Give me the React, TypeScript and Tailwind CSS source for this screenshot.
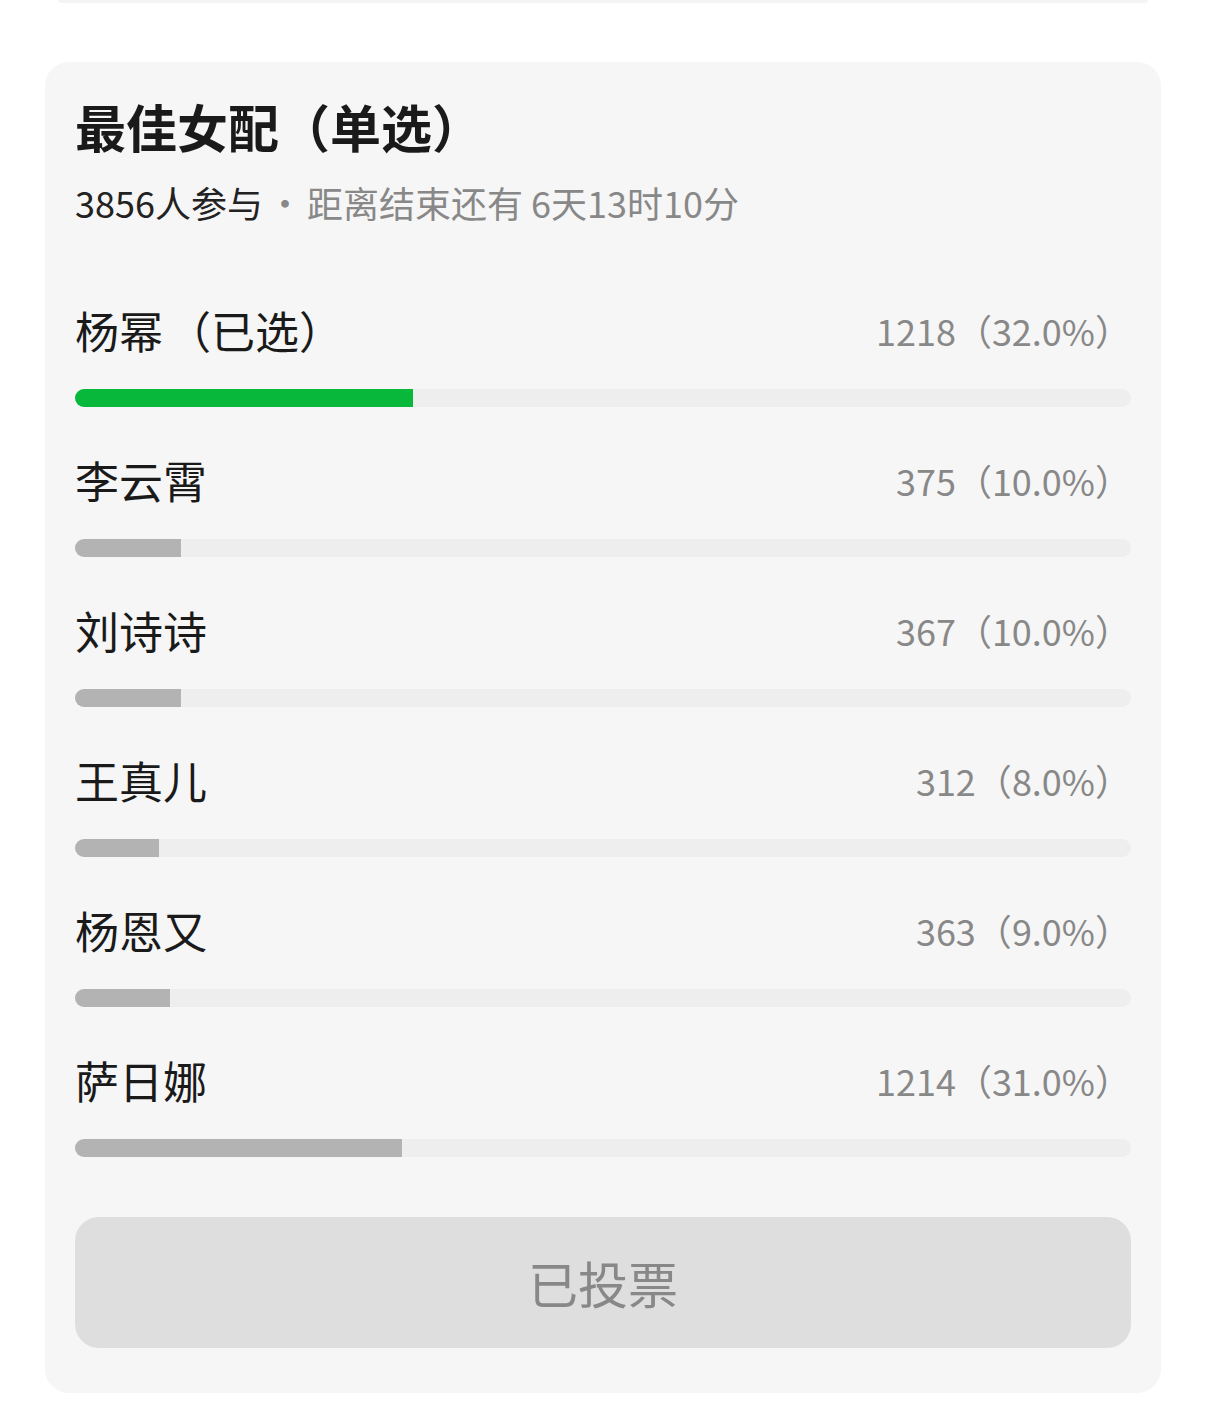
import * as React from "react";

type Option = {
  name: string;
  votes: number;
  percent: number;
  picked?: boolean;
};

const OPTIONS: Option[] = [
  { name: "杨幂", votes: 1218, percent: 32, picked: true },
  { name: "李云霄", votes: 375, percent: 10 },
  { name: "刘诗诗", votes: 367, percent: 10 },
  { name: "王真儿", votes: 312, percent: 8 },
  { name: "杨恩又", votes: 363, percent: 9 },
  { name: "萨日娜", votes: 1214, percent: 31 },
];

const FONT = "font-['Noto_Sans_CJK_SC','Noto_Sans',sans-serif]";

function OptionRow({ option }: { option: Option }) {
  return (
    <div className="flex flex-col">
      <div className="flex items-center justify-between">
        <span className="text-[44px] leading-[56px] text-[#1a1a1a]">
          {option.name}
          {option.picked && <span className="ml-[4px]">（已选）</span>}
        </span>
        <span className="text-[36px] leading-[56px] text-[#888888]">
          {option.votes}（{option.percent.toFixed(1)}%）
        </span>
      </div>
      <div className="mt-[31px] h-[18px] w-full overflow-hidden rounded-[9px] bg-[#eeeeee]">
        <div
          className={option.picked ? "h-full bg-[#08b83b]" : "h-full bg-[#b3b3b3]"}
          style={{ width: `${option.percent}%` }}
        />
      </div>
    </div>
  );
}

export default function App() {
  return (
    <div className={`min-h-[1415px] w-full bg-white ${FONT}`}>
      {/* bottom edge of the previous card */}
      <div className="mx-[58px] h-[3px] rounded-b-[3px] bg-[#f4f4f4]" />

      <div className="mx-[45px] mt-[59px] rounded-[24px] bg-[#f6f6f6] px-[30px] pt-[34px] pb-[45px]">
        <h2 className="text-[51px] font-bold leading-[60px] text-[#1a1a1a]">最佳女配（单选）</h2>
        <p className="mt-[24px] text-[36px] leading-[44px] text-[#888888]">
          <span className="text-[#222222]">3856人参与</span>
          <span className="mx-[4px]">·</span>
          距离结束还有 6天13时10分
        </p>

        <div className="mt-[78px] flex flex-col gap-[45px]">
          {OPTIONS.map((o) => (
            <OptionRow key={o.name} option={o} />
          ))}
        </div>

        <button
          type="button"
          disabled
          className="mt-[60px] flex h-[131px] w-full items-center justify-center rounded-[24px] bg-[#dedede] text-[50px] text-[#888888]"
        >
          已投票
        </button>
      </div>
    </div>
  );
}
